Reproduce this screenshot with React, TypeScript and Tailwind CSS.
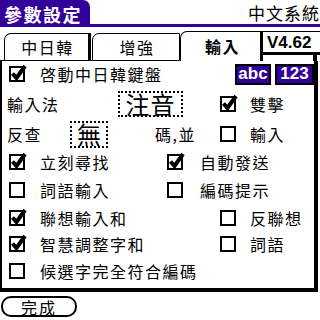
import React from 'react';

function Box({ checked }: { checked?: boolean }) {
  return (
    <svg width="16" height="16" viewBox="0 0 16 16" className="shrink-0 overflow-visible">
      <rect x="1" y="1" width="14" height="14" fill="none" stroke="black" strokeWidth="2" />
      {checked && (
        <path d="M3.5 7.5 L7.5 12 L16 0" fill="none" stroke="black" strokeWidth="4" strokeLinecap="butt" strokeLinejoin="miter" />
      )}
    </svg>
  );
}

const T = 'text-[16px] leading-none tracking-[1.5px] whitespace-nowrap';

function Opt({ checked, label, w, gap = 16 }: { checked?: boolean; label: string; w?: string; gap?: number }) {
  return (
    <div className={`flex items-center ${w ?? ''}`}>
      <Box checked={checked} />
      <span className={`${T} ${gap === 16 ? 'ml-[15px]' : gap === 18 ? 'ml-[17px]' : 'ml-[14px]'}`}>{label}</span>
    </div>
  );
}

export default function App() {
  return (
    <div className="w-[320px] h-[320px] bg-white text-black overflow-hidden font-['Noto_Sans_CJK_TC','Noto_Sans',sans-serif]">
      {/* header */}
      <div className="flex items-end h-[27px]">
        <div className="w-[90px] h-[27px] bg-[#330099] rounded-tr-[7px] text-white font-bold text-[18px] leading-none tracking-[1.5px] pl-[4px] flex items-center">
          參數設定
        </div>
        <div className="flex-1 h-[27px] flex flex-col">
          <div className={`flex-1 flex items-center justify-end ${T} text-[17px] tracking-[1px] pr-0`}>中文系統</div>
          <div className="h-[3px] bg-[#330099]" />
        </div>
      </div>

      {/* tabs */}
      <div className="mt-[4px] flex items-end h-[30px]">
        <div className="w-[4px] h-[1px] bg-black" />
        <div className="w-[87px] h-[28px] border-l border-t border-r-[3px] border-b border-black rounded-tl-[7px] flex items-center justify-center">
          <span className={`${T} pl-[2px]`}>中日韓</span>
        </div>
        <div className="w-[1px] h-[1px] bg-black" />
        <div className="w-[88px] h-[28px] border-l border-t border-r border-b border-black rounded-tl-[7px] flex items-center justify-center">
          <span className={`${T} pl-[2px]`}>增強</span>
        </div>
        <div className="w-[83px] h-[30px] border-l border-t border-r-[3px] border-black rounded-tl-[7px] flex items-center justify-center pb-[2px]">
          <span className={`${T} font-bold pl-[4px]`}>輸入</span>
        </div>
        <div className="w-[57px] h-[30px] flex flex-col">
          <div className="h-[24px] border-t border-b-[3px] border-black flex items-center pl-[4px] font-['Liberation_Sans',sans-serif] font-bold text-[17px] leading-none">
            V4.62
          </div>
          <div className="flex-1 mr-[3px] border-r-4 border-black" />
        </div>
      </div>

      {/* panel */}
      <div className="w-[318px] border-l-2 border-r-4 border-b-4 border-black pb-[3px]">
        {/* row 1 */}
        <div className="h-[26px] flex items-center pl-[7px]">
          <Opt checked label="啓動中日韓鍵盤" w="w-[226px]" />
          <div className="h-[21px] w-[36px] bg-[#330099] border-2 border-black flex items-center justify-center text-white font-['Liberation_Sans',sans-serif] font-bold text-[17px] leading-none pb-[1px]">abc</div>
          <div className="h-[21px] w-[39px] ml-[4px] bg-[#330099] border-2 border-black flex items-center justify-center text-white font-['Liberation_Sans',sans-serif] font-bold text-[17px] leading-none pb-[1px]">123</div>
        </div>
        {/* row 2 */}
        <div className="h-[33px] flex items-center pl-[5px]">
          <div className={`${T} w-[111px]`}>輸入法</div>
          <div className="w-[65px] h-[26px] border-2 border-dotted border-black flex items-center justify-center text-[24px] leading-none tracking-[1px]">注音</div>
          <div className="w-[37px]" />
          <Opt checked label="雙擊" gap={15} />
        </div>
        {/* row 3 */}
        <div className="h-[28px] flex items-center pl-[5px]">
          <div className={`${T} w-[63px]`}>反查</div>
          <div className="w-[38px] h-[27px] border-2 border-dotted border-black flex items-center justify-center text-[24px] leading-none">無</div>
          <div className="w-[47px]" />
          <div className={`${T} w-[65px]`}>碼,並</div>
          <Opt label="輸入" gap={15} />
        </div>
        {/* row 4 */}
        <div className="h-[27px] flex items-center pl-[7px]">
          <Opt checked label="立刻尋找" w="w-[158px]" />
          <Opt checked label="自動發送" gap={18} />
        </div>
        {/* row 5 */}
        <div className="h-[29px] flex items-center pl-[7px]">
          <Opt label="詞語輸入" w="w-[158px]" />
          <Opt label="編碼提示" gap={18} />
        </div>
        {/* row 6 */}
        <div className="h-[27px] flex items-center pl-[7px]">
          <Opt checked label="聯想輸入和" w="w-[211px]" />
          <Opt label="反聯想" gap={15} />
        </div>
        {/* row 7 */}
        <div className="h-[26px] flex items-center pl-[7px]">
          <Opt checked label="智慧調整字和" w="w-[211px]" />
          <Opt label="詞語" gap={15} />
        </div>
        {/* row 8 */}
        <div className="h-[28px] flex items-center pl-[7px]">
          <Opt label="候選字完全符合編碼" />
        </div>
      </div>

      {/* button */}
      <div className="mt-[4px] ml-[1px] w-[76px] h-[21px] border-2 border-black rounded-[10px] flex items-center justify-center">
        <span className={`${T} tracking-[2px]`}>完成</span>
      </div>
    </div>
  );
}
